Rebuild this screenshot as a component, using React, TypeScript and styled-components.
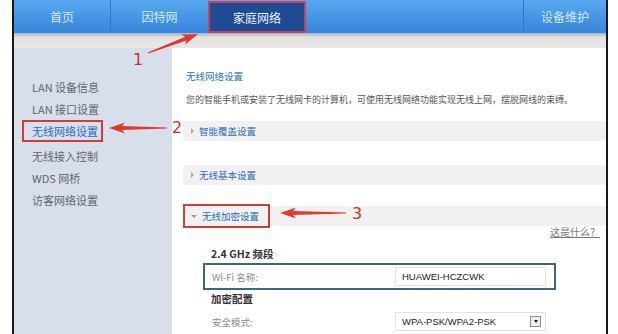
import React from "react";
import styled, { createGlobalStyle, css } from "styled-components";

const Global = createGlobalStyle`
  html, body { margin: 0; padding: 0; background: #fff; }
  body { font-family: "Noto Sans CJK SC", "Noto Sans", sans-serif; }
`;

const Page = styled.div`
  position: relative;
  width: 618px;
  height: 334px;
  overflow: hidden;
  background: #fff;
`;

const Frame = styled.div`
  margin-left: 12px;
  width: 592px;
  height: 334px;
  border-left: 2px solid #15181c;
  border-right: 2px solid #15181c;
  display: flex;
  flex-direction: column;
`;

const Nav = styled.div`
  height: 33px;
  flex-shrink: 0;
  display: flex;
  background: linear-gradient(#5aa9f0, #3f8fe3 70%, #3a86d8);
`;

const Tab = styled.div<{ $w: number; $active?: boolean; $divider?: boolean }>`
  width: ${(p) => p.$w}px;
  flex-shrink: 0;
  display: flex;
  align-items: center;
  justify-content: center;
  font-size: 12px;
  color: #d6e8fb;
  box-sizing: border-box;
  ${(p) => p.$divider && css`border-left: 1px solid #2f78c4;`}
  ${(p) =>
    p.$active &&
    css`
      background: #1e4b92;
      color: #e9f1fb;
      border: 2px solid #c9405a;
      margin-top: 1px;
    `}
`;

const Spacer = styled.div`
  flex: 1;
`;

const SubBand = styled.div`
  height: 15px;
  flex-shrink: 0;
  background: linear-gradient(#9fb8cf, #e6e3da 30%, #e4e4e4 60%, #e8e8e8);
`;

const Body = styled.div`
  flex: 1;
  display: flex;
  min-height: 0;
`;

const Sidebar = styled.div`
  width: 158px;
  flex-shrink: 0;
  background: #d8dfea;
  padding-top: 29px;
  box-sizing: border-box;
  display: flex;
  flex-direction: column;
  align-items: flex-start;
`;

const SideItem = styled.div<{ $active?: boolean; $gap?: number }>`
  margin-left: 9px;
  padding: 0 4px 0 9px;
  height: 20px;
  line-height: 20px;
  margin-bottom: ${(p) => p.$gap ?? 2}px;
  font-size: 11px;
  color: ${(p) => (p.$active ? "#2a6cc2" : "#5e6670")};
  ${(p) => p.$active && css`outline: 2px solid #d23b3b; outline-offset: -1px;`}
`;

const Content = styled.div`
  flex: 1;
  min-width: 0;
  background: #fff;
  margin-top: 2px;
  padding: 18px 0 0 11px;
  display: flex;
  flex-direction: column;
`;

const Title = styled.div`
  font-size: 9.5px;
  color: #2f6fbf;
  margin-left: 3px;
  line-height: 16px;
`;

const Desc = styled.div`
  font-size: 9px;
  color: #555;
  margin: 8px 0 0 3px;
  line-height: 16px;
  white-space: nowrap;
`;

const SectionBar = styled.div<{ $top: number }>`
  margin-top: ${(p) => p.$top}px;
  height: 20px;
  flex-shrink: 0;
  background: #f1f1f1;
  display: flex;
  align-items: center;
  padding-left: 8px;
  font-size: 9.5px;
  color: #2d6bb5;
`;

const SectionLabel = styled.span<{ $boxed?: boolean }>`
  display: flex;
  align-items: center;
  gap: 5px;
  ${(p) =>
    p.$boxed &&
    css`
      margin-left: -6px;
      padding: 3px 9px 3px 6px;
      outline: 2px solid #d23b3b;
    `}
`;

const Caret = styled.span<{ $open?: boolean }>`
  width: 0;
  height: 0;
  ${(p) =>
    p.$open
      ? css`
          border-left: 3px solid transparent;
          border-right: 3px solid transparent;
          border-top: 3px solid #999;
        `
      : css`
          border-top: 3px solid transparent;
          border-bottom: 3px solid transparent;
          border-left: 3px solid #aaa;
        `}
`;

const HelpLink = styled.div`
  align-self: flex-end;
  margin-right: 6px;
  margin-top: 0;
  font-size: 10px;
  color: #777;
  text-decoration: underline;
  line-height: 12px;
`;

const GroupTitle = styled.div<{ $top: number }>`
  margin: ${(p) => p.$top}px 0 0 28px;
  font-size: 10.5px;
  font-weight: bold;
  color: #333;
  line-height: 14px;
`;

const FieldRow = styled.div<{ $boxed?: boolean; $top: number }>`
  margin: ${(p) => p.$top}px 0 0 20px;
  width: 353px;
  height: 27px;
  flex-shrink: 0;
  box-sizing: border-box;
  display: flex;
  align-items: center;
  padding-left: 9px;
  ${(p) => p.$boxed && css`border: 2px solid #3f6680; padding-left: 7px;`}
`;

const FieldLabel = styled.div`
  width: 183px;
  font-size: 9.5px;
  color: #8a8a8a;
`;

const Input = styled.div`
  width: 151px;
  height: 19px;
  box-sizing: border-box;
  border: 1px solid #e2e2e2;
  font-family: "Liberation Sans", Arial, sans-serif;
  font-size: 9.5px;
  color: #222;
  padding-left: 6px;
  display: flex;
  align-items: center;
  justify-content: space-between;
`;

const SelectBtn = styled.span`
  width: 9px;
  height: 9px;
  margin-right: 4px;
  border: 1px solid #8d8d8d;
  background: #eee;
  display: flex;
  align-items: center;
  justify-content: center;
  &::after {
    content: "";
    border-left: 2px solid transparent;
    border-right: 2px solid transparent;
    border-top: 3px solid #222;
  }
`;

const Overlay = styled.svg`
  position: absolute;
  left: 0;
  top: 0;
  pointer-events: none;
`;

const Num = styled.span<{ $x: number; $y: number }>`
  position: absolute;
  left: ${(p) => p.$x}px;
  top: ${(p) => p.$y}px;
  font-family: "DejaVu Sans", sans-serif;
  font-size: 16px;
  line-height: 18px;
  color: #c8332d;
`;

function Arrow({ x1, y1, x2, y2 }: { x1: number; y1: number; x2: number; y2: number }) {
  const L = Math.hypot(x2 - x1, y2 - y1);
  const ang = (Math.atan2(y2 - y1, x2 - x1) * 180) / Math.PI;
  const pts = [
    [0, -0.6],
    [L - 13, -2],
    [L - 16, -5.5],
    [L, 0],
    [L - 16, 5.5],
    [L - 13, 2],
    [0, 0.6],
  ]
    .map((p) => p.join(","))
    .join(" ");
  return (
    <polygon
      points={pts}
      fill="#de3a30"
      transform={`translate(${x1},${y1}) rotate(${ang})`}
    />
  );
}

export default function App() {
  return (
    <Page>
      <Global />
      <Frame>
        <Nav>
          <Tab $w={96}>首页</Tab>
          <Tab $w={98} $divider>因特网</Tab>
          <Tab $w={98} $active>家庭网络</Tab>
          <Spacer />
          <Tab $w={83} $divider>设备维护</Tab>
        </Nav>
        <SubBand />
        <Body>
          <Sidebar>
            <SideItem>LAN 设备信息</SideItem>
            <SideItem>LAN 接口设置</SideItem>
            <SideItem $active $gap={5}>无线网络设置</SideItem>
            <SideItem>无线接入控制</SideItem>
            <SideItem>WDS 网桥</SideItem>
            <SideItem>访客网络设置</SideItem>
          </Sidebar>
          <Content>
            <Title>无线网络设置</Title>
            <Desc>您的智能手机或安装了无线网卡的计算机，可使用无线网络功能实现无线上网，摆脱网线的束缚。</Desc>
            <SectionBar $top={13}>
              <SectionLabel><Caret />智能覆盖设置</SectionLabel>
            </SectionBar>
            <SectionBar $top={24}>
              <SectionLabel><Caret />无线基本设置</SectionLabel>
            </SectionBar>
            <SectionBar $top={21}>
              <SectionLabel $boxed><Caret $open />无线加密设置</SectionLabel>
            </SectionBar>
            <HelpLink>这是什么？</HelpLink>
            <GroupTitle $top={9}>2.4 GHz 频段</GroupTitle>
            <FieldRow $boxed $top={2}>
              <FieldLabel>Wi-Fi 名称:</FieldLabel>
              <Input>HUAWEI-HCZCWK</Input>
            </FieldRow>
            <GroupTitle $top={2}>加密配置</GroupTitle>
            <FieldRow $top={2}>
              <FieldLabel>安全模式:</FieldLabel>
              <Input>
                WPA-PSK/WPA2-PSK
                <SelectBtn />
              </Input>
            </FieldRow>
          </Content>
        </Body>
      </Frame>
      <Overlay width={618} height={334}>
        <Arrow x1={148} y1={53} x2={198} y2={34} />
        <Arrow x1={167} y1={128} x2={109} y2={128} />
        <Arrow x1={346} y1={213} x2={280} y2={213} />
      </Overlay>
      <Num $x={133} $y={51}>1</Num>
      <Num $x={172} $y={119}>2</Num>
      <Num $x={352} $y={205}>3</Num>
    </Page>
  );
}
